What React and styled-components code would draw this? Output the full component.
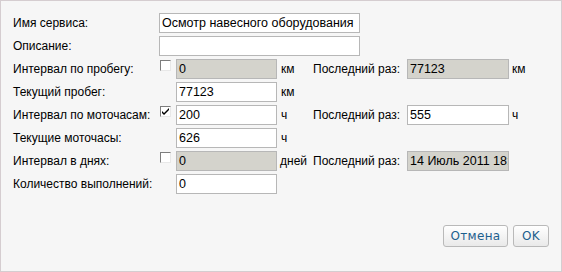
import React from 'react'
import styled, { createGlobalStyle } from 'styled-components'

const GlobalStyle = createGlobalStyle`
  html, body {
    margin: 0;
    padding: 0;
    background: #f6f6f6;
  }
`

const Dialog = styled.div`
  box-sizing: border-box;
  width: 562px;
  height: 272px;
  background: #f6f6f6;
  border: 1px solid #d5cdd0;
  display: flex;
  flex-direction: column;
  font-family: 'Liberation Sans', Arial, sans-serif;
  font-size: 12px;
  color: #000;
`

const Form = styled.div`
  display: grid;
  grid-template-columns: 146px 17px 101px 36px 94px 102px auto;
  grid-auto-rows: 20px;
  row-gap: 3px;
  padding: 12px 0 0 12px;
`

const Label = styled.div`
  grid-column: ${props => props.col || 1};
  display: flex;
  align-items: center;
  white-space: nowrap;
`

const Unit = styled.div`
  display: flex;
  align-items: center;
  padding-left: ${props => props.pad || 4}px;
  white-space: nowrap;
`

const Input = styled.div`
  box-sizing: border-box;
  grid-column: ${props => props.span ? '2 / span 5' : 'auto'};
  width: ${props => props.span ? '201px' : 'auto'};
  height: 20px;
  border: 1px solid #b7b7b7;
  background: ${props => props.disabled ? '#d4d3cc' : '#fff'};
  padding: 0 2px;
  display: flex;
  align-items: center;
  overflow: hidden;
  white-space: nowrap;
  font-size: 12.5px;
`

const CheckCell = styled.div`
  display: flex;
  align-items: flex-start;
  padding: 1px 0 0 1px;
`

const Box = styled.div`
  box-sizing: border-box;
  width: 11px;
  height: 11px;
  border-top: 1px solid #7d7d7d;
  border-left: 1px solid #7d7d7d;
  border-right: 1px solid #e8e8e8;
  border-bottom: 1px solid #e8e8e8;
  background: #fff;
  display: flex;
  align-items: center;
  justify-content: center;
`

const Footer = styled.div`
  margin-top: auto;
  display: flex;
  justify-content: flex-end;
  gap: 5px;
  padding: 0 12px 24px 0;
`

const Button = styled.button`
  box-sizing: border-box;
  height: 22px;
  width: ${props => props.w}px;
  padding: 0;
  border: 1px solid #b9b9b9;
  border-radius: 3px;
  background: linear-gradient(#ffffff, #e9e9e9);
  color: #1d5f8e;
  font-family: 'DejaVu Sans', Verdana, sans-serif;
  font-size: 12px;
  letter-spacing: 0.3px;
  cursor: pointer;
`

const Check = ({ checked }) => (
  <CheckCell>
    <Box>
      {checked && (
        <svg width="9" height="9" viewBox="0 0 9 9">
          <path d="M1 4 L3 6 L8 1 L8 3 L3 8 L1 6 Z" fill="#000" />
        </svg>
      )}
    </Box>
  </CheckCell>
)

export default function App() {
  return (
    <>
      <GlobalStyle />
      <Dialog>
        <Form>
          <Label>Имя сервиса:</Label>
          <Input span>Осмотр навесного оборудования</Input>

          <Label>Описание:</Label>
          <Input span />

          <Label>Интервал по пробегу:</Label>
          <Check />
          <Input disabled>0</Input>
          <Unit>км</Unit>
          <Label col="auto">Последний раз:</Label>
          <Input disabled>77123</Input>
          <Unit pad={3}>км</Unit>

          <Label>Текущий пробег:</Label>
          <Input style={{ gridColumn: 3 }}>77123</Input>
          <Unit style={{ gridColumn: '4 / span 4' }}>км</Unit>

          <Label>Интервал по моточасам:</Label>
          <Check checked />
          <Input>200</Input>
          <Unit>ч</Unit>
          <Label col="auto">Последний раз:</Label>
          <Input>555</Input>
          <Unit pad={3}>ч</Unit>

          <Label>Текущие моточасы:</Label>
          <Input style={{ gridColumn: 3 }}>626</Input>
          <Unit style={{ gridColumn: '4 / span 4' }}>ч</Unit>

          <Label>Интервал в днях:</Label>
          <Check />
          <Input disabled>0</Input>
          <Unit pad={3}>дней</Unit>
          <Label col="auto">Последний раз:</Label>
          <Input disabled>14 Июль 2011 18:</Input>
          <Unit />

          <Label>Количество выполнений:</Label>
          <Input style={{ gridColumn: 3 }}>0</Input>
        </Form>
        <Footer>
          <Button w={65}>Отмена</Button>
          <Button w={36}>OK</Button>
        </Footer>
      </Dialog>
    </>
  )
}
